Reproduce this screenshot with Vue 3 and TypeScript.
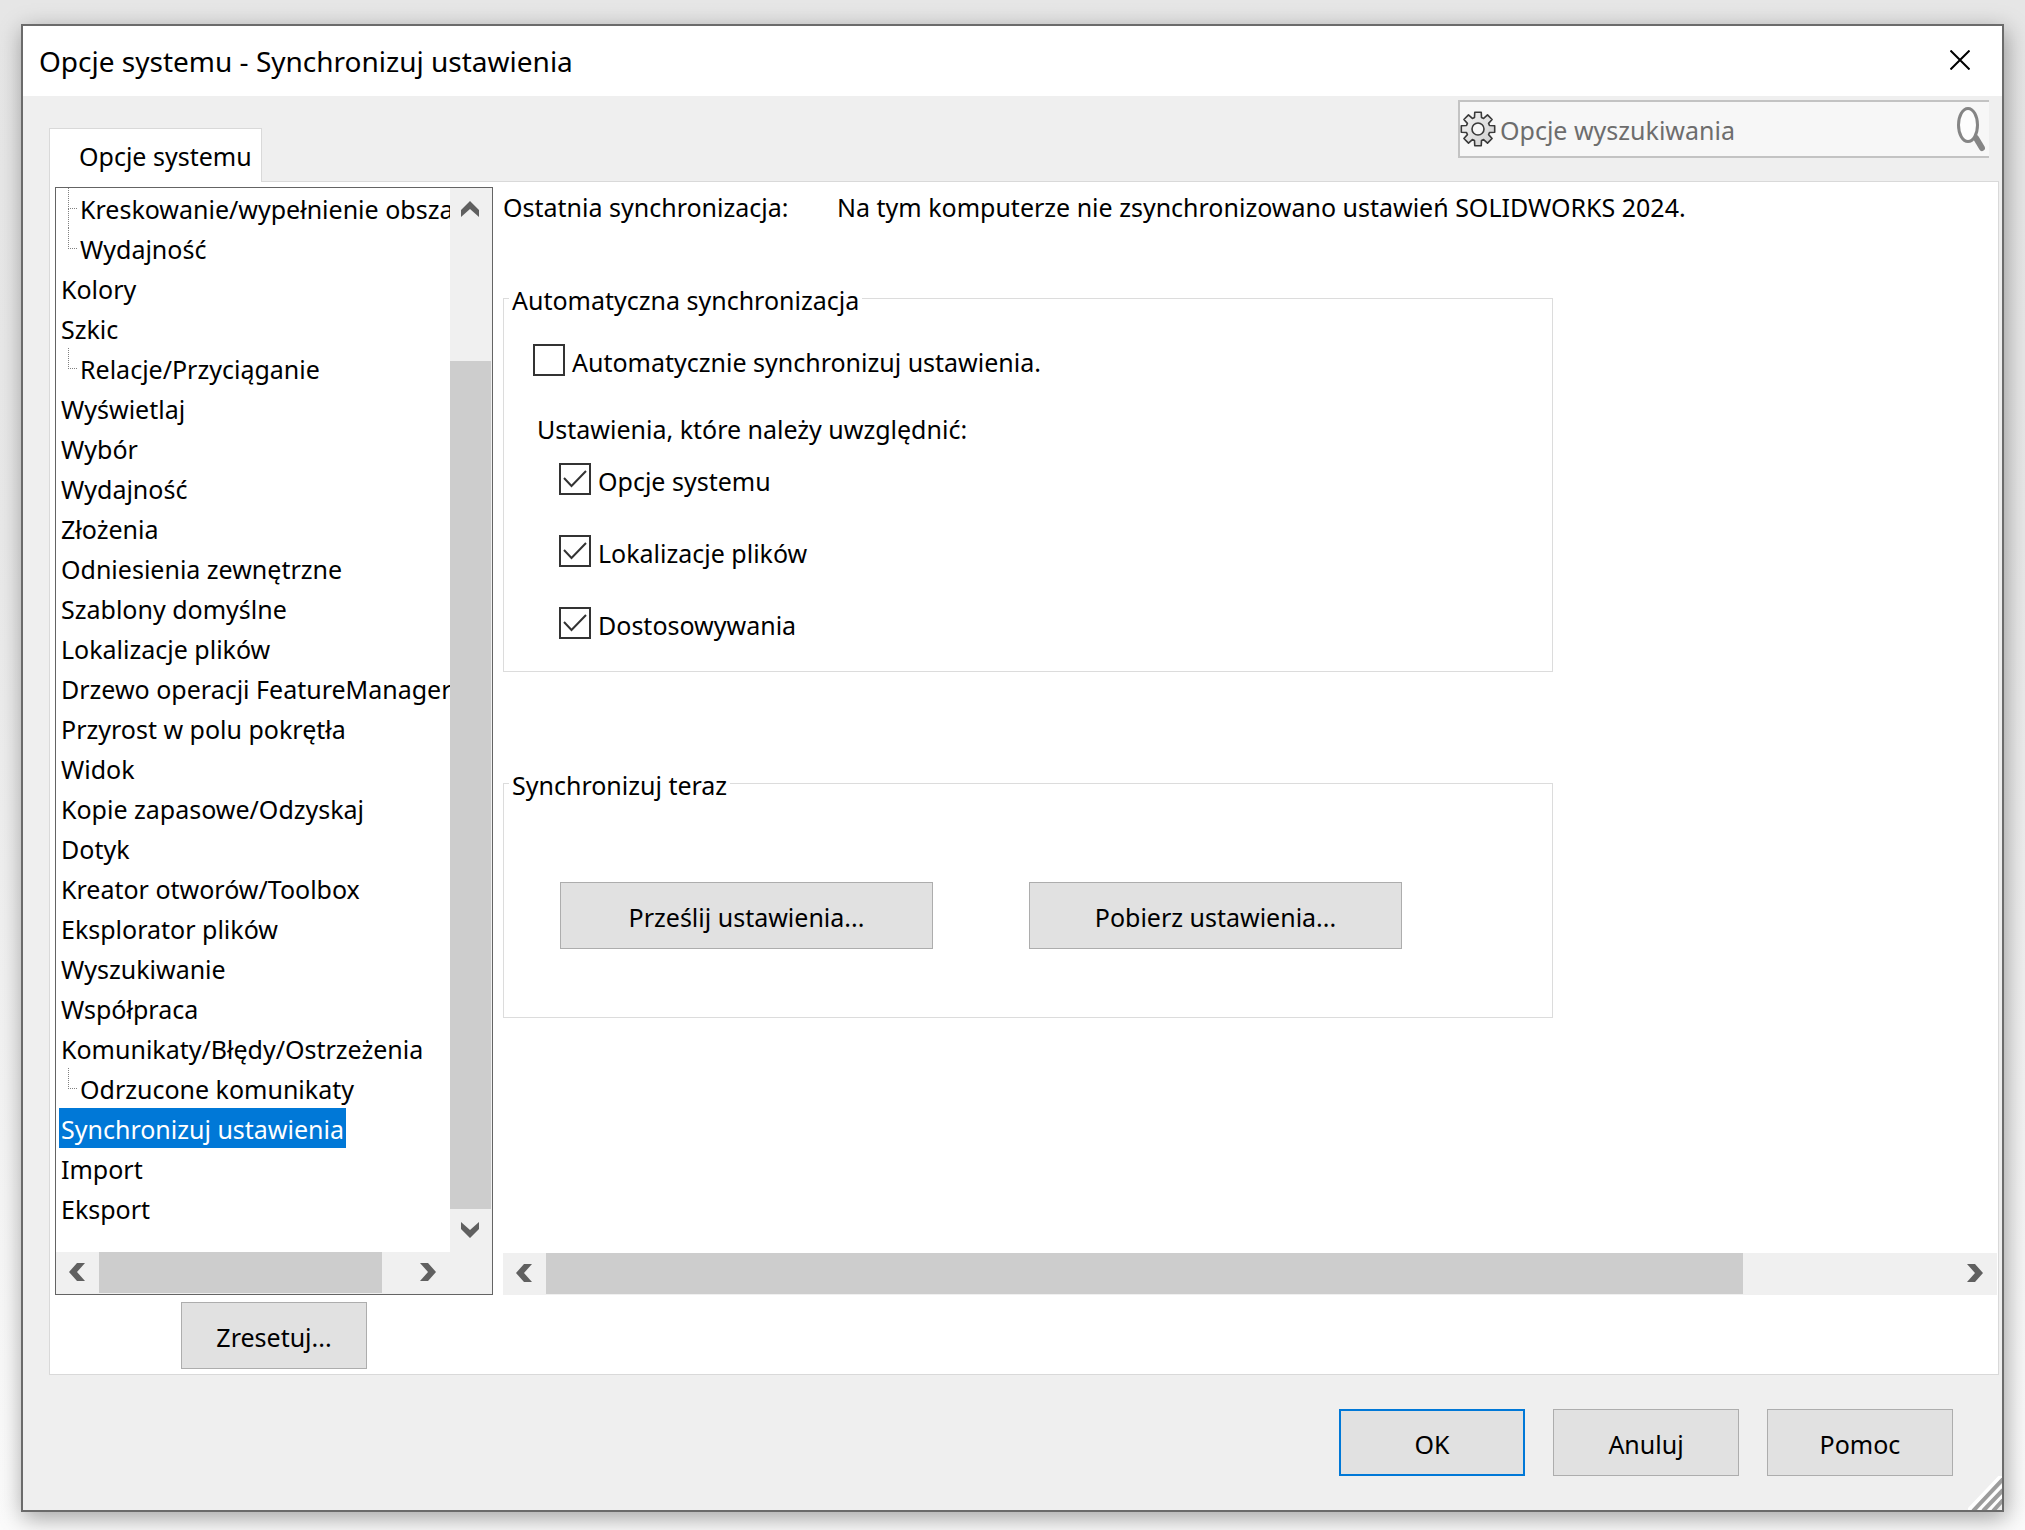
<script setup lang="ts">
import { reactive, ref } from 'vue'

interface TreeItem {
  label: string
  child?: boolean
  more?: boolean
}

const items: TreeItem[] = [
  { label: 'Kreskowanie/wypełnienie obszaru', child: true, more: true },
  { label: 'Wydajność', child: true },
  { label: 'Kolory' },
  { label: 'Szkic' },
  { label: 'Relacje/Przyciąganie', child: true },
  { label: 'Wyświetlaj' },
  { label: 'Wybór' },
  { label: 'Wydajność' },
  { label: 'Złożenia' },
  { label: 'Odniesienia zewnętrzne' },
  { label: 'Szablony domyślne' },
  { label: 'Lokalizacje plików' },
  { label: 'Drzewo operacji FeatureManager' },
  { label: 'Przyrost w polu pokrętła' },
  { label: 'Widok' },
  { label: 'Kopie zapasowe/Odzyskaj' },
  { label: 'Dotyk' },
  { label: 'Kreator otworów/Toolbox' },
  { label: 'Eksplorator plików' },
  { label: 'Wyszukiwanie' },
  { label: 'Współpraca' },
  { label: 'Komunikaty/Błędy/Ostrzeżenia' },
  { label: 'Odrzucone komunikaty', child: true },
  { label: 'Synchronizuj ustawienia' },
  { label: 'Import' },
  { label: 'Eksport' },
]

const selected = ref(23)
const query = ref('')
const autoSync = ref(false)
const included = reactive([
  { id: 'inc-system', label: 'Opcje systemu', on: true },
  { id: 'inc-files', label: 'Lokalizacje plików', on: true },
  { id: 'inc-custom', label: 'Dostosowywania', on: true },
])

// Outline of an eight-toothed gear centred in a 36 x 36 box
function gearPath(): string {
  const points: string[] = []
  const at = (deg: number, r: number) => {
    const a = (deg * Math.PI) / 180
    points.push(`${(18 + r * Math.sin(a)).toFixed(2)} ${(18 - r * Math.cos(a)).toFixed(2)}`)
  }
  for (let i = 0; i < 8; i++) {
    const c = i * 45
    at(c - 17, 12)
    at(c - 11, 17)
    at(c + 11, 17)
    at(c + 17, 12)
  }
  return `M${points.join('L')}Z`
}
const gear = gearPath()
</script>

<template>
  <div class="desktop">
    <main class="dialog" role="dialog" aria-labelledby="dialog-title">
      <header class="titlebar">
        <h1 id="dialog-title">Opcje systemu - Synchronizuj ustawienia</h1>
        <button class="close" type="button" aria-label="Zamknij">
          <svg width="20" height="20" viewBox="0 0 20 20"><path d="M0.5 0.5L19.5 19.5M19.5 0.5L0.5 19.5" fill="none" stroke="#000" stroke-width="2" /></svg>
        </button>
      </header>

      <div class="topbar">
        <button class="tab" type="button" role="tab" aria-selected="true">Opcje systemu</button>
        <div class="search">
          <svg class="gear" width="36" height="36" viewBox="0 0 36 36">
            <defs>
              <linearGradient id="gear-fill" x1="0" y1="0" x2="1" y2="1">
                <stop offset="0" stop-color="#f4f4f4" />
                <stop offset="1" stop-color="#cfcfcf" />
              </linearGradient>
            </defs>
            <path :d="gear" fill="url(#gear-fill)" stroke="#3a3a3a" stroke-width="1.6" stroke-linejoin="round" />
            <circle cx="18" cy="18" r="6" fill="#f7f7f7" stroke="#3a3a3a" stroke-width="1.6" />
          </svg>
          <input v-model="query" type="text" placeholder="Opcje wyszukiwania" aria-label="Opcje wyszukiwania" />
          <svg class="lens" width="28" height="46" viewBox="0 0 28 46">
            <path d="M19 32L25 42" stroke="#858585" stroke-width="6" stroke-linecap="round" />
            <ellipse cx="11" cy="19" rx="9.5" ry="16.5" fill="#fdfdfd" stroke="#858585" stroke-width="3" />
          </svg>
        </div>
      </div>

      <div class="panel">
        <div class="side">
          <div class="tree-box">
            <ul class="tree" role="tree">
              <li
                v-for="(item, i) in items"
                :key="i"
                role="treeitem"
                :aria-selected="i === selected"
                @click="selected = i"
              >
                <i v-if="item.child" class="branch" :class="{ more: item.more }"></i>
                <span class="item" :class="{ selected: i === selected }">{{ item.label }}</span>
              </li>
            </ul>
            <div class="vscroll">
              <button type="button" aria-label="W górę"><svg width="18" height="16" viewBox="0 0 18 16"><path d="M9 0L18 9V16L9 8L0 16V9Z" fill="#606060" /></svg></button>
              <div class="track"><div class="thumb"></div></div>
              <button type="button" aria-label="W dół"><svg width="18" height="16" viewBox="0 0 18 16"><path d="M9 16L18 7V0L9 8L0 0V7Z" fill="#606060" /></svg></button>
            </div>
            <div class="hscroll">
              <button type="button" aria-label="W lewo"><svg width="16" height="18" viewBox="0 0 16 18"><path d="M0 9L8 0H16L8 9L16 18H8Z" fill="#606060" /></svg></button>
              <div class="track"><div class="thumb wide"></div></div>
              <button type="button" aria-label="W prawo"><svg width="16" height="18" viewBox="0 0 16 18"><path d="M16 9L8 0H0L8 9L0 18H8Z" fill="#606060" /></svg></button>
            </div>
            <div class="corner"></div>
          </div>
          <button class="btn reset" type="button">Zresetuj...</button>
        </div>

        <section class="pane">
          <div class="content">
            <p class="status"><span class="status-name">Ostatnia synchronizacja:</span><span>Na tym komputerze nie zsynchronizowano ustawień SOLIDWORKS 2024.</span></p>

            <fieldset class="auto">
              <legend>Automatyczna synchronizacja</legend>
              <label class="check" for="auto-sync">
                <span class="box">
                  <input id="auto-sync" v-model="autoSync" type="checkbox" />
                  <svg v-if="autoSync" viewBox="0 0 32 32"><path d="M5 15L12.5 23L27 8" /></svg>
                </span>
                Automatycznie synchronizuj ustawienia.
              </label>
              <p class="include">Ustawienia, które należy uwzględnić:</p>
              <div class="list">
                <label v-for="opt in included" :key="opt.id" class="check" :for="opt.id">
                  <span class="box">
                    <input :id="opt.id" v-model="opt.on" type="checkbox" />
                    <svg v-if="opt.on" viewBox="0 0 32 32"><path d="M5 15L12.5 23L27 8" /></svg>
                  </span>
                  {{ opt.label }}
                </label>
              </div>
            </fieldset>

            <fieldset class="now">
              <legend>Synchronizuj teraz</legend>
              <div class="actions">
                <button class="btn" type="button">Prześlij ustawienia...</button>
                <button class="btn" type="button">Pobierz ustawienia...</button>
              </div>
            </fieldset>
          </div>

          <div class="hscroll">
            <button type="button" aria-label="W lewo"><svg width="16" height="18" viewBox="0 0 16 18"><path d="M0 9L8 0H16L8 9L16 18H8Z" fill="#606060" /></svg></button>
            <div class="track"><div class="thumb"></div></div>
            <button type="button" aria-label="W prawo"><svg width="16" height="18" viewBox="0 0 16 18"><path d="M16 9L8 0H0L8 9L0 18H8Z" fill="#606060" /></svg></button>
          </div>
        </section>
      </div>

      <footer class="footer">
        <button class="btn default" type="button">OK</button>
        <button class="btn" type="button">Anuluj</button>
        <button class="btn" type="button">Pomoc</button>
      </footer>

      <svg class="grip" width="34" height="34" viewBox="0 0 34 34" aria-hidden="true">
        <path d="M0 35L35 -2M11 35L35 10M21 35L35 20" stroke="#fff" stroke-width="4" />
        <path d="M5 35L35 3M15 35L35 14M25 35L35 24" stroke="#9c9c9c" stroke-width="4" />
      </svg>
    </main>
  </div>
</template>

<style>
body {
  margin: 0;
}
</style>

<style scoped>
.desktop {
  box-sizing: border-box;
  min-height: 100vh;
  padding: 24px 21px 18px;
  background: linear-gradient(#e6e6e6, #e9e9e9 35%, #fbfbfb);
  color: #000;
  font-family: 'Noto Sans', 'Open Sans', sans-serif;
  font-size: 25px;
  line-height: 40px;
  overflow: hidden;
}

.dialog {
  position: relative;
  border: 2px solid #6b6b6b;
  background: #efefef;
  box-shadow: 2px 6px 22px rgba(0, 0, 0, 0.36);
}

button,
input {
  margin: 0;
  font: inherit;
  color: inherit;
}

.titlebar {
  display: flex;
  align-items: center;
  justify-content: space-between;
  box-sizing: border-box;
  height: 70px;
  padding: 0 22px 0 16px;
  background: #fff;
}

.titlebar h1 {
  margin: 0;
  font-size: 28px;
  font-weight: 400;
}

.close {
  display: flex;
  padding: 10px 10px 12px;
  border: 0;
  background: none;
}

.topbar {
  display: flex;
  justify-content: space-between;
  height: 85px;
  padding: 0 13px 0 26px;
}

.tab {
  position: relative;
  z-index: 1;
  align-self: flex-end;
  box-sizing: border-box;
  height: 54px;
  margin-bottom: -1px;
  padding: 5px 9px 5px 29px;
  border: 1px solid #d9d9d9;
  border-bottom: 0;
  background: #fff;
}

.search {
  display: flex;
  align-items: center;
  box-sizing: border-box;
  width: 531px;
  height: 58px;
  margin-top: 4px;
  padding-right: 4px;
  border: 2px solid #c3c3c3;
  border-right: 0;
  background: #f7f7f7;
}

.gear,
.lens {
  flex: none;
}

.search input {
  flex: 1;
  min-width: 0;
  height: 40px;
  padding: 2px 4px 0;
  border: 0;
  outline: 0;
  background: none;
}

.search input::placeholder {
  color: #6d6d6d;
  opacity: 1;
}

.panel {
  display: flex;
  gap: 10px;
  margin: 0 3px 0 26px;
  padding: 5px 1px 5px 5px;
  border: 1px solid #d9d9d9;
  background: #fff;
}

.side {
  flex: none;
  width: 438px;
}

.tree-box {
  display: grid;
  grid-template-columns: minmax(0, 1fr) 42px;
  grid-template-rows: auto 42px;
  border: 1px solid #646464;
}

.tree {
  margin: 0;
  padding: 0 0 24px 3px;
  overflow: hidden;
  list-style: none;
  line-height: 42px;
  white-space: nowrap;
}

.tree li {
  display: flex;
  height: 40px;
}

.item {
  padding: 0 2px;
}

.item.selected {
  background: #0078d7;
  color: #fff;
}

.branch {
  flex: none;
  width: 19px;
}

.branch::before {
  content: '';
  display: block;
  box-sizing: border-box;
  width: 9px;
  height: 21px;
  margin-left: 9px;
  border: dotted #808080;
  border-width: 0 0 1px 1px;
}

.branch.more::after {
  content: '';
  display: block;
  height: 19px;
  margin-left: 9px;
  border-left: 1px dotted #808080;
}

.vscroll,
.hscroll {
  display: flex;
  background: #f0f0f0;
}

.vscroll {
  flex-direction: column;
}

.hscroll {
  height: 42px;
}

.vscroll button,
.hscroll button {
  display: flex;
  flex: none;
  align-items: center;
  justify-content: center;
  width: 43px;
  padding: 0 2px 2px 0;
  border: 0;
  background: none;
}

.vscroll button {
  width: 41px;
  height: 43px;
}

.track {
  flex: 1;
}

.thumb {
  width: 85%;
  height: 41px;
  background: #cdcdcd;
}

.thumb.wide {
  width: 92%;
}

.vscroll .track {
  display: flex;
  flex-direction: column;
  padding-top: 130px;
}

.vscroll .thumb {
  flex: 1;
  width: 41px;
}

.corner {
  background: #f0f0f0;
}

.btn {
  box-sizing: border-box;
  width: 186px;
  height: 67px;
  padding: 3px 0 0;
  border: 1px solid #adadad;
  background: #e1e1e1;
}

.btn.default {
  border: 2px solid #0078d7;
}

.reset {
  display: block;
  margin: 7px 0 0 126px;
}

.pane {
  display: flex;
  flex: 1;
  flex-direction: column;
  min-width: 0;
  margin-bottom: 74px;
}

.content {
  flex: 1;
  overflow: hidden;
}

p {
  margin: 0;
}

.status {
  display: flex;
  white-space: nowrap;
}

.status-name {
  width: 334px;
}

fieldset {
  box-sizing: border-box;
  width: 1050px;
  max-width: 100%;
  min-width: 0;
  margin: 0;
  padding: 0 5px;
  border: 1px solid #dcdcdc;
}

legend {
  height: 36px;
  padding: 0 3px;
}

.auto {
  margin-top: 53px;
  padding: 26px 24px 26px 5px;
}

.auto > .check {
  margin-left: 24px;
}

.include {
  margin: 27px 0 12px 28px;
}

.list {
  display: flex;
  flex-direction: column;
  gap: 32px;
  margin-left: 50px;
}

.check {
  display: flex;
  gap: 7px;
}

.box {
  position: relative;
  flex: none;
  width: 32px;
  height: 32px;
  margin-top: 2px;
}

.box input {
  display: block;
  box-sizing: border-box;
  width: 32px;
  height: 32px;
  border: 2px solid #333;
  background: #fff;
  appearance: none;
}

.box svg {
  position: absolute;
  inset: 0;
  fill: none;
  stroke: #333;
  stroke-width: 2;
  pointer-events: none;
}

.now {
  margin-top: 93px;
}

.actions {
  display: flex;
  gap: 96px;
  padding: 81px 0 68px 51px;
}

.actions .btn {
  width: 373px;
}

.footer {
  display: flex;
  justify-content: flex-end;
  gap: 28px;
  padding: 34px 49px;
}

.grip {
  position: absolute;
  right: 0;
  bottom: 0;
}
</style>
